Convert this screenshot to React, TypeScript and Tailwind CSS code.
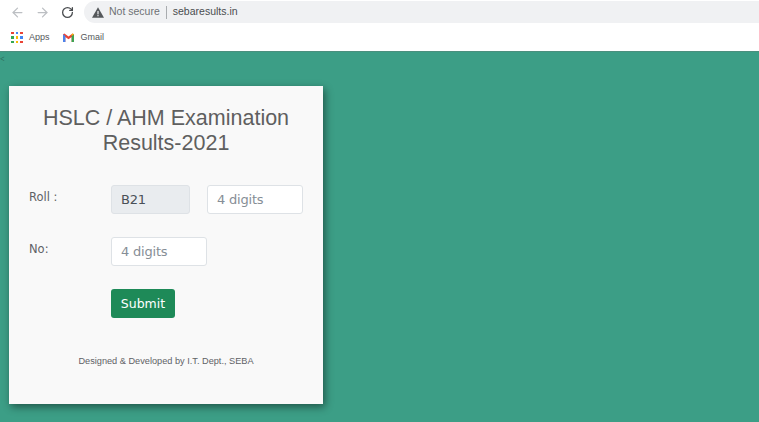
import React from 'react';
import { ArrowLeft, ArrowRight, RotateCw } from 'lucide-react';

// nine coloured dots of the Apps shortcut
const appDots = ['#ea4335', '#4285f4', '#ea4335', '#34a853', '#fbbc05', '#4285f4', '#34a853', '#fbbc05', '#ea4335'];

function GmailIcon() {
  return (
    <svg width="11" height="9" viewBox="0 0 12 10">
      <path d="M0 1.5V10h2.5V4.5L6 7l3.5-2.5V10H12V1.5L10.5.5 6 4 1.5.5z" fill="#ea4335" />
      <path d="M0 1.5V10h2.5V3.4z" fill="#4285f4" />
      <path d="M12 1.5V10H9.5V3.4z" fill="#34a853" />
      <path d="M9.5 3.4 12 1.5 10.5.5 9.5 1.3z" fill="#fbbc05" />
    </svg>
  );
}

function BrowserBar() {
  return (
    <div className="bg-white font-['Liberation_Sans',sans-serif]">
      <div className="h-[24px] flex items-center pl-[10px]">
        <ArrowLeft size={15} strokeWidth={2} className="text-[#bcbfc3]" />
        <ArrowRight size={15} strokeWidth={2} className="text-[#bcbfc3] ml-[10px]" />
        <RotateCw size={13} strokeWidth={2.4} className="text-[#4a4d50] ml-[11px]" />
        <div className="flex-1 h-[22px] ml-[10px] rounded-l-full bg-[#f0f1f3] flex items-center pl-[8px]">
          <svg width="12" height="11" viewBox="0 0 14 12">
            <path d="M7 0 14 12H0z" fill="#55585b" />
            <rect x="6.3" y="4.2" width="1.4" height="4" fill="#f0f1f3" />
            <rect x="6.3" y="9" width="1.4" height="1.4" fill="#f0f1f3" />
          </svg>
          <span className="ml-[5px] text-[10.5px] text-[#6e7175]">Not secure</span>
          <span className="ml-[6px] w-px h-[13px] bg-[#a9acaf]" />
          <span className="ml-[6px] text-[10.5px] text-[#4a4d50]">sebaresults.in</span>
        </div>
      </div>
      <div className="h-[27px] flex items-center pl-[11px] text-[9px] text-[#55585b]">
        <div className="grid grid-cols-3 gap-[2px] w-[12px]">
          {appDots.map((c, i) => (
            <span key={i} className="w-[2.5px] h-[2.5px]" style={{ backgroundColor: c }} />
          ))}
        </div>
        <span className="ml-[6px]">Apps</span>
        <span className="ml-[13px] flex"><GmailIcon /></span>
        <span className="ml-[7px]">Gmail</span>
      </div>
    </div>
  );
}

function FormRow({ label, children }: { label: string; children: React.ReactNode }) {
  return (
    <div className="flex items-start">
      <label className="w-[82px] pt-[4px] text-[11.5px] text-[#5f6266]">{label}</label>
      <div className="flex gap-[17px]">{children}</div>
    </div>
  );
}

const inputClass = "h-[29px] px-[9px] rounded-[3px] border border-[#dee2e6] text-[13px] text-[#495057] placeholder:text-[#868e96] font-['DejaVu_Sans',sans-serif] tracking-[-0.2px] outline-none";

export default function App() {
  return (
    <div className="w-[759px] h-[422px] overflow-hidden flex flex-col">
      <BrowserBar />
      <main className="relative flex-1 bg-[#3c9e86] border-t border-[#4b8f7e] pt-[34px] pl-[9px]">
        <span className="absolute left-0 top-[3px] text-[8px] leading-none text-[#2c6f5f]">&lt;</span>
        <div className="w-[314px] h-[318px] bg-[#f9f9f9] shadow-[2px_3px_8px_rgba(0,0,0,0.45)] pt-[20px] pl-[20px] pr-[18px] font-['DejaVu_Sans',sans-serif]">
          <h1 className="-ml-[2px] text-center text-[21.5px] leading-[25px] text-[#5f5f5f] font-['Liberation_Sans',sans-serif] font-normal">
            HSLC / AHM Examination
            <br />
            Results-2021
          </h1>
          <form className="mt-[29px] flex flex-col gap-[23px]">
            <FormRow label="Roll :">
              <input className={`${inputClass} w-[79px] bg-[#e9ecef]`} value="B21" readOnly />
              <input className={`${inputClass} w-[96px] bg-white`} placeholder="4 digits" />
            </FormRow>
            <FormRow label="No:">
              <input className={`${inputClass} w-[96px] bg-white`} placeholder="4 digits" />
            </FormRow>
            <div className="pl-[82px]">
              <button type="button" className="w-[64px] h-[29px] pt-[1px] rounded-[3px] bg-[#1e8a58] text-white text-[12.5px]">
                Submit
              </button>
            </div>
          </form>
          <p className="mt-[37px] -ml-[2px] text-center text-[9.2px] text-[#5f6266] font-['Liberation_Sans',sans-serif]">
            Designed &amp; Developed by I.T. Dept., SEBA
          </p>
        </div>
      </main>
    </div>
  );
}
